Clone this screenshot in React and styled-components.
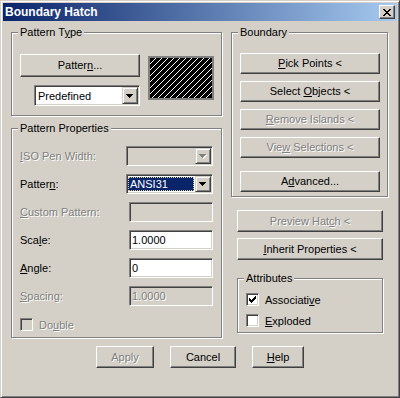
import React from "react";
import styled, { createGlobalStyle } from "styled-components";

const face = "#d4d0c8";

const GlobalStyle = createGlobalStyle`
  html, body {
    margin: 0;
    padding: 0;
    background: ${face};
  }
  body {
    font-family: "Liberation Sans", Arial, sans-serif;
    font-size: 11px;
  }
  * {
    box-sizing: border-box;
  }
`;

const Window = styled.div`
  width: 400px;
  height: 398px;
  background: ${face};
  border: 1px solid;
  border-color: ${face} #404040 #404040 ${face};
  box-shadow: inset 1px 1px #fff, inset -1px -1px #808080;
  padding: 2px;
  display: flex;
  flex-direction: column;
  color: #000;
`;

const TitleBar = styled.div`
  height: 18px;
  flex: none;
  background: linear-gradient(to right, #0a246a, #a6caf0);
  display: flex;
  align-items: center;
  justify-content: space-between;
  padding: 0 2px;
`;

const Title = styled.span`
  color: #fff;
  font-weight: bold;
  font-size: 12px;
`;

const CloseButton = styled.div`
  width: 16px;
  height: 14px;
  background: ${face};
  border: 1px solid;
  border-color: #fff #404040 #404040 #fff;
  box-shadow: inset -1px -1px #808080;
  display: flex;
  align-items: center;
  justify-content: center;
  padding-top: 1px;
`;

const Body = styled.div`
  display: grid;
  grid-template-columns: 211px 157px;
  column-gap: 9px;
  padding: 11px 0 0 8px;
  align-items: start;
`;

const Column = styled.div`
  display: flex;
  flex-direction: column;
  align-items: flex-start;
`;

const Group = styled.div`
  position: relative;
  width: ${(p) => p.$w}px;
  height: ${(p) => p.$h}px;
  margin-top: ${(p) => p.$mt || 0}px;
  margin-left: ${(p) => p.$ml || 0}px;
  border: 1px solid #808080;
  box-shadow: 1px 1px #fff, inset 1px 1px #fff;
  padding: ${(p) => p.$pad};
`;

const Caption = styled.span`
  position: absolute;
  top: -7px;
  left: 6px;
  padding: 0 2px;
  line-height: 13px;
  background: ${face};
`;

const Key = styled.span`
  text-decoration: underline;
  text-underline-offset: 1px;
`;

const Button = styled.div`
  width: ${(p) => p.$w}px;
  height: ${(p) => p.$h || 22}px;
  line-height: ${(p) => (p.$h || 22) - 2}px;
  margin-top: ${(p) => p.$mt || 0}px;
  margin-left: ${(p) => p.$ml || 0}px;
  flex: none;
  background: ${face};
  border: 1px solid;
  border-color: #fff #404040 #404040 #fff;
  box-shadow: inset -1px -1px #808080;
  text-align: center;
  white-space: pre;
  color: ${(p) => (p.$off ? "#808080" : "#000")};
  text-shadow: ${(p) => (p.$off ? "1px 1px #fff" : "none")};
`;

const TypeRow = styled.div`
  display: flex;
  gap: 8px;
`;

const TypeStack = styled.div`
  width: 120px;
  display: flex;
  flex-direction: column;
  align-items: flex-end;
  gap: 8px;
`;

const Preview = styled.div`
  width: 66px;
  height: 44px;
  margin-top: 2px;
  border: 2px solid #808080;
  background: #000;
  display: flex;
`;

const Sunken = styled.div`
  width: ${(p) => p.$w}px;
  height: ${(p) => p.$h || 20}px;
  flex: none;
  background: ${(p) => (p.$off ? face : "#fff")};
  border: 1px solid;
  border-color: #808080 #fff #fff #808080;
  box-shadow: inset 1px 1px #404040, inset -1px -1px ${face};
  padding: 1px;
  display: flex;
  align-items: stretch;
  color: ${(p) => (p.$off ? "#808080" : "#000")};
`;

const FieldText = styled.span`
  flex: 1;
  display: flex;
  align-items: center;
  padding-left: ${(p) => p.$pl ?? 2}px;
  text-shadow: ${(p) => (p.$off ? "1px 1px #fff" : "none")};
`;

const Selected = styled.span`
  flex: 1;
  margin: 1px 1px 1px 0;
  display: flex;
  align-items: center;
  background: #0a246a;
  color: #fff;
  border: 1px dotted #d8d0a0;
  padding-left: 1px;
`;

const DropButton = styled.span`
  width: 16px;
  flex: none;
  background: ${face};
  border: 1px solid;
  border-color: ${face} #404040 #404040 ${face};
  box-shadow: inset 1px 1px #fff, inset -1px -1px #808080;
  display: flex;
  align-items: center;
  justify-content: center;
  padding-top: 1px;
`;

const PropList = styled.div`
  display: flex;
  flex-direction: column;
  gap: 8px;
`;

const PropRow = styled.div`
  height: 20px;
  display: flex;
  align-items: center;
  justify-content: space-between;
`;

const Label = styled.span`
  color: ${(p) => (p.$off ? "#808080" : "#000")};
  text-shadow: ${(p) => (p.$off ? "1px 1px #fff" : "none")};
`;

const CheckRow = styled.div`
  display: flex;
  align-items: center;
  gap: 6px;
  height: 13px;
  margin-top: ${(p) => p.$mt || 0}px;
`;

const Box = styled.span`
  width: 13px;
  height: 13px;
  flex: none;
  background: ${(p) => (p.$off ? face : "#fff")};
  border: 1px solid;
  border-color: #808080 #fff #fff #808080;
  box-shadow: inset 1px 1px #404040, inset -1px -1px ${face};
  display: flex;
  align-items: center;
  justify-content: center;
`;

const Footer = styled.div`
  display: flex;
  gap: 16px;
  margin-top: 8px;
  padding-left: 93px;
`;

const Arrow = ({ off }) => {
  const d = "M0 0h7v1H0zM1 1h5v1H1zM2 2h3v1H2zM3 3h1v1H3z";
  return (
    <svg width="8" height="5" viewBox="0 0 8 5">
      {off && <path d={d} fill="#fff" transform="translate(1 1)" />}
      <path d={d} fill={off ? "#808080" : "#000"} />
    </svg>
  );
};

const CloseGlyph = () => (
  <svg width="8" height="7" viewBox="0 0 8 7">
    <path
      d="M0 0h2v1H0zM6 0h2v1H6zM1 1h2v1H1zM5 1h2v1H5zM2 2h4v1H2zM3 3h2v1H3zM2 4h4v1H2zM1 5h2v1H1zM5 5h2v1H5zM0 6h2v1H0zM6 6h2v1H6z"
      fill="#000"
    />
  </svg>
);

const CheckGlyph = () => (
  <svg width="7" height="7" viewBox="0 0 7 7">
    <path
      d="M6 0h1v1H6zM5 1h2v1H5zM0 2h1v1H0zM4 2h3v1H4zM0 3h2v1H0zM3 3h3v1H3zM0 4h5v1H0zM1 5h3v1H1zM2 6h1v1H2z"
      fill="#000"
    />
  </svg>
);

const Hatch = () => (
  <svg width="62" height="40" viewBox="0 0 62 40">
    <defs>
      <pattern id="ansi31" width="6" height="6" patternUnits="userSpaceOnUse">
        <path d="M5 0h1v1H5zM4 1h1v1H4zM3 2h1v1H3zM2 3h1v1H2zM1 4h1v1H1zM0 5h1v1H0z" fill="#fff" />
      </pattern>
    </defs>
    <rect width="62" height="40" fill="url(#ansi31)" />
  </svg>
);

const Combo = ({ w, h, off, children, selected }) => (
  <Sunken $w={w} $h={h} $off={off}>
    {selected ? <Selected>{children}</Selected> : <FieldText $off={off}>{children}</FieldText>}
    <DropButton>
      <Arrow off={off} />
    </DropButton>
  </Sunken>
);

const Field = ({ off, children }) => (
  <Sunken $w={84} $off={off}>
    <FieldText $off={off} $pl={1}>
      {children}
    </FieldText>
  </Sunken>
);

const Check = ({ checked, off, mt, children }) => (
  <CheckRow $mt={mt}>
    <Box $off={off}>{checked && <CheckGlyph />}</Box>
    <Label $off={off}>{children}</Label>
  </CheckRow>
);

export default function App() {
  return (
    <>
      <GlobalStyle />
      <Window>
        <TitleBar>
          <Title>Boundary Hatch</Title>
          <CloseButton>
            <CloseGlyph />
          </CloseButton>
        </TitleBar>

        <Body>
          <Column>
            <Group $w={211} $h={84} $pad="21px 8px 0 8px">
              <Caption>
                Pattern T<Key>y</Key>pe
              </Caption>
              <TypeRow>
                <TypeStack>
                  <Button $w={120} $h={23}>
                    Patter<Key>n</Key>...
                  </Button>
                  <Combo w={106} h={21}>
                    Predefined
                  </Combo>
                </TypeStack>
                <Preview>
                  <Hatch />
                </Preview>
              </TypeRow>
            </Group>

            <Group $w={211} $h={210} $mt={12} $pad="17px 8px 0 8px">
              <Caption>Pattern Properties</Caption>
              <PropList>
                <PropRow>
                  <Label $off>
                    <Key>I</Key>SO Pen Width:
                  </Label>
                  <Combo w={87} off />
                </PropRow>
                <PropRow>
                  <Label>
                    Patter<Key>n</Key>:
                  </Label>
                  <Combo w={87} selected>
                    ANSI31
                  </Combo>
                </PropRow>
                <PropRow>
                  <Label $off>
                    <Key>C</Key>ustom Pattern:
                  </Label>
                  <Field off />
                </PropRow>
                <PropRow>
                  <Label>
                    Sca<Key>l</Key>e:
                  </Label>
                  <Field>1.0000</Field>
                </PropRow>
                <PropRow>
                  <Label>
                    <Key>A</Key>ngle:
                  </Label>
                  <Field>0</Field>
                </PropRow>
                <PropRow>
                  <Label $off>
                    <Key>S</Key>pacing:
                  </Label>
                  <Field off>1.0000</Field>
                </PropRow>
              </PropList>
              <Check off mt={12}>
                Do<Key>u</Key>ble
              </Check>
            </Group>
          </Column>

          <Column>
            <Group $w={157} $h={165} $pad="20px 8px 0 8px">
              <Caption>Boundary</Caption>
              <Button $w={140} $h={21}>
                <Key>P</Key>ick Points &lt;
              </Button>
              <Button $w={140} $h={21} $mt={7}>
                Select <Key>O</Key>bjects &lt;
              </Button>
              <Button $w={140} $h={21} $mt={7} $off>
                <Key>R</Key>emove Islands &lt;
              </Button>
              <Button $w={140} $h={21} $mt={7} $off>
                Vie<Key>w</Key> Selections &lt;
              </Button>
              <Button $w={140} $h={21} $mt={13}>
                A<Key>d</Key>vanced...
              </Button>
            </Group>

            <Button $w={146} $mt={13} $ml={6} $off>
              Preview Hat<Key>c</Key>h &lt;
            </Button>
            <Button $w={146} $mt={6} $ml={6}>
              <Key>I</Key>nherit Properties &lt;
            </Button>

            <Group $w={146} $h={55} $mt={18} $ml={6} $pad="14px 8px 0 8px">
              <Caption>Attributes</Caption>
              <Check checked>
                Associati<Key>v</Key>e
              </Check>
              <Check mt={8}>
                <Key>E</Key>xploded
              </Check>
            </Group>
          </Column>
        </Body>

        <Footer>
          <Button $w={58} $off>
            Apply
          </Button>
          <Button $w={66}>Cancel</Button>
          <Button $w={52}>
            <Key>H</Key>elp
          </Button>
        </Footer>
      </Window>
    </>
  );
}
